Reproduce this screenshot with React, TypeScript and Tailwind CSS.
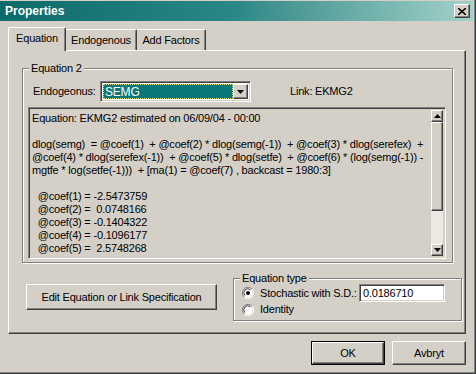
import React from "react"

const raised =
  "border border-t-white border-l-white border-r-[#404040] border-b-[#404040] shadow-[inset_-1px_-1px_0_#808080]"
const sunken =
  "border border-t-[#808080] border-l-[#808080] border-r-white border-b-white shadow-[inset_1px_1px_0_#404040,inset_-1px_-1px_0_#d4d0c8]"
const etched = "border border-[#808080] shadow-[inset_1px_1px_0_#fff,1px_1px_0_#fff]"

function Arrow({ up }: { up?: boolean }) {
  return (
    <svg width="7" height="4" viewBox="0 0 7 4">
      <path d={up ? "M3.5 0 L7 4 L0 4 Z" : "M0 0 L7 0 L3.5 4 Z"} fill="#000" />
    </svg>
  )
}

function Radio({ checked }: { checked?: boolean }) {
  return (
    <div className="relative w-[12px] h-[12px] shrink-0">
      <svg width="12" height="12" viewBox="0 0 12 12">
        <path d="M10 2 A5.5 5.5 0 0 0 2 10" fill="none" stroke="#808080" />
        <path d="M2 10 A5.5 5.5 0 0 0 10 2" fill="none" stroke="#fff" />
        <circle cx="6" cy="6" r="4.5" fill="#fff" />
        <path d="M8.5 3 A3.6 3.6 0 0 0 3 8.5" fill="none" stroke="#404040" />
        {checked && <circle cx="6" cy="6" r="2" fill="#000" />}
      </svg>
    </div>
  )
}

function GroupLabel({ children, className }: { children: React.ReactNode; className: string }) {
  return <span className={`absolute bg-[#d4d0c8] px-[2px] leading-[13px] whitespace-nowrap ${className}`}>{children}</span>
}

const lines = [
  "Equation: EKMG2 estimated on 06/09/04 - 00:00",
  "",
  "dlog(semg)  = @coef(1)  + @coef(2) * dlog(semg(-1))  + @coef(3) * dlog(serefex)  +",
  "@coef(4) * dlog(serefex(-1))  + @coef(5) * dlog(setfe)  + @coef(6) * (log(semg(-1)) -",
  "mgtfe * log(setfe(-1)))  + [ma(1) = @coef(7) , backcast = 1980:3]",
  "",
  "  @coef(1) = -2.5473759",
  "  @coef(2) =  0.0748166",
  "  @coef(3) = -0.1404322",
  "  @coef(4) = -0.1096177",
  "  @coef(5) =  2.5748268",
]

export default function App() {
  return (
    <div className="w-[476px] h-[374px] bg-[#d4d0c8] border-r border-b border-[#404040] font-['Liberation_Sans',Arial,sans-serif] text-[11px] tracking-[-0.2px] text-black overflow-hidden">
      <div className="h-full border-r border-b border-[#808080] pt-px">
        {/* title bar */}
        <div className="h-[20px] mr-px flex items-center justify-between bg-linear-to-r from-[#0a6a6a] via-[#2a8886] to-[#a2d2ca] pl-[5px] pr-[3px]">
          <span className="text-white font-bold text-[12px] leading-none tracking-normal">Properties</span>
          <div className={`w-[16px] h-[14px] bg-[#d4d0c8] flex items-center justify-center ${raised}`}>
            <svg width="8" height="7" viewBox="0 0 8 7">
              <path d="M0 0 L8 7 M8 0 L0 7" stroke="#000" strokeWidth="1.6" />
            </svg>
          </div>
        </div>

        <div className="pl-[8px] pt-[6px]">
          {/* tabs */}
          <div className="flex items-end h-[23px] relative z-10">
            <div className="h-[24px] -mb-px w-[58px] bg-[#d4d0c8] border-t border-l border-r border-t-white border-l-white border-r-[#404040] rounded-tl-[2px] rounded-tr-[2px] flex items-center justify-center pb-[2px] shadow-[inset_-1px_0_0_#808080]">
              Equation
            </div>
            <div className="h-[21px] w-[71px] border-t border-r border-t-white border-r-[#404040] rounded-tr-[2px] flex items-center justify-center shadow-[inset_-1px_0_0_#808080]">
              Endogenous
            </div>
            <div className="h-[21px] w-[69px] border-t border-r border-t-white border-r-[#404040] rounded-tr-[2px] flex items-center justify-center shadow-[inset_-1px_0_0_#808080]">
              Add Factors
            </div>
          </div>

          {/* panel */}
          <div className={`w-[458px] h-[284px] ${raised}`}>
            <div className={`relative ml-[13px] mt-[17px] w-[431px] h-[195px] ${etched}`}>
              <GroupLabel className="-top-[7px] left-[6px]">Equation 2</GroupLabel>
              <div className="flex items-center mt-[12px] pl-[10px]">
                <span className="w-[67px]">Endogeonus:</span>
                <div className={`w-[151px] h-[21px] bg-white flex items-stretch p-[2px] ${sunken}`}>
                  <div className="flex-1 bg-[#0a7878] text-white flex items-center pl-[2px] outline-1 outline-dotted outline-[#e0e070] -outline-offset-1 text-[12px]">
                    SEMG
                  </div>
                  <div className={`w-[15px] bg-[#d4d0c8] flex items-center justify-center ${raised}`}>
                    <Arrow />
                  </div>
                </div>
                <span className="ml-[39px]">Link: EKMG2</span>
              </div>

              <div className={`flex ml-[5px] mt-[5px] w-[418px] h-[152px] p-[2px] ${sunken}`}>
                <div className="flex-1 pl-[1px] pt-[2px] leading-[13px] whitespace-pre">
                  {lines.map((l, i) => (
                    <div key={i} className="h-[13px]">
                      {l}
                    </div>
                  ))}
                </div>
                <div className="w-[12px] flex flex-col">
                  <div className={`h-[12px] bg-[#d4d0c8] flex items-center justify-center ${raised}`}>
                    <Arrow up />
                  </div>
                  <div className={`h-[89px] bg-[#d4d0c8] ${raised}`} />
                  <div className="flex-1 bg-[#ebe9e4]" />
                  <div className={`h-[12px] bg-[#d4d0c8] flex items-center justify-center ${raised}`}>
                    <Arrow />
                  </div>
                </div>
              </div>
            </div>

            <div className="flex items-start mt-[15px]">
              <div className={`ml-[17px] mt-[6px] w-[191px] h-[26px] flex items-center justify-center whitespace-nowrap ${raised}`}>
                Edit Equation or Link Specification
              </div>
              <div className={`relative ml-[16px] w-[229px] h-[43px] ${etched}`}>
                <GroupLabel className="-top-[7px] left-[6px]">Equation type</GroupLabel>
                <div className="flex items-center mt-[5px] pl-[8px] h-[18px]">
                  <Radio checked />
                  <span className="ml-[6px] w-[99px] whitespace-nowrap">Stochastic with S.D.:</span>
                  <div className={`w-[86px] h-[18px] bg-white flex items-center pl-[3px] ${sunken}`}>0.0186710</div>
                </div>
                <div className="flex items-center pl-[8px] h-[13px] mt-px">
                  <Radio />
                  <span className="ml-[6px]">Identity</span>
                </div>
              </div>
            </div>
          </div>

          {/* buttons */}
          <div className="flex justify-end gap-[7px] mt-[7px] w-[458px]">
            <div className="w-[74px] h-[24px] border border-black">
              <div className={`h-full flex items-center justify-center ${raised}`}>OK</div>
            </div>
            <div className={`w-[74px] h-[24px] flex items-center justify-center ${raised}`}>Avbryt</div>
          </div>
        </div>
      </div>
    </div>
  )
}
